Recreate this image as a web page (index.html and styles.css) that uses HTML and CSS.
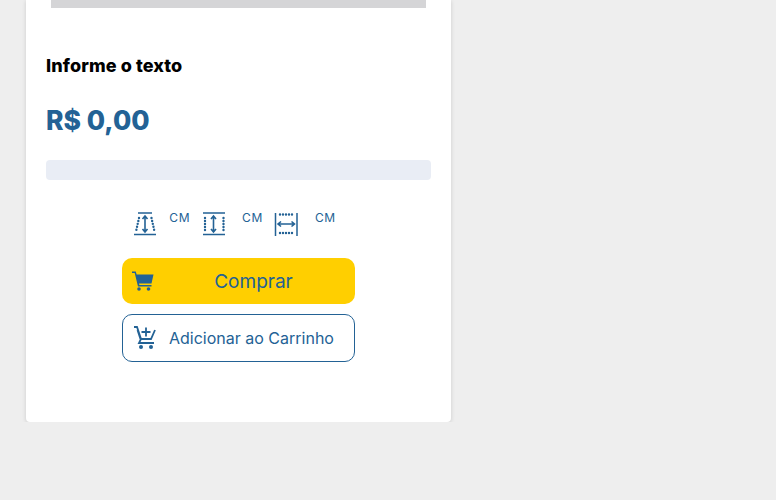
FILE: index.html
```html
<!DOCTYPE html>
<html lang="pt-BR">
<head>
    <meta charset="UTF-8">
    <title>Informe o texto</title>
    <link rel="stylesheet" href="styles.css">
</head>
<body>
<div class="card">
    <div class="preview"></div>
    <div class="content">
        <h2 class="title">Informe o texto</h2>
        <div class="price">R$ 0,00</div>
        <div class="text-input"></div>

        <div class="sizes">
            <div class="size size-1">
                <svg class="size-icon" width="26" height="26" viewBox="0 0 26 26">
                    <path class="line" d="M6 3h14M2 24.500h22"/>
                    <path class="line arrow" d="M13 6v15.500M10.500 9l2.500-3 2.500 3M10.500 19l2.500 3 2.500-3"/>
                    <path class="dots" d="M7 8l-1 4.500-1 4.500-1 4.500M19.500 8l1 4.500 1 4.500 1 4.500"/>
                </svg>
                <span>CM</span>
            </div>
            <div class="size size-2">
                <svg class="size-icon" width="26" height="26" viewBox="0 0 26 26">
                    <path class="line" d="M2 3h22M2 24.500h22"/>
                    <path class="line arrow" d="M12.500 6v15.500M10 9l2.500-3 2.500 3M10 19l2.500 3 2.500-3"/>
                    <path class="dots" d="M4 8v14M22.500 8v14"/>
                </svg>
                <span>CM</span>
            </div>
            <div class="size size-3">
                <svg class="size-icon" width="26" height="26" viewBox="0 0 26 26">
                    <path class="line" d="M2.500 3v23M24 3v23"/>
                    <path class="line arrow" d="M5 14h16.500M8 11.500l-3 2.500 3 2.500M18.500 11.500l3 2.500-3 2.500"/>
                    <path class="dots" d="M7 4.500h13M7 23h13"/>
                </svg>
                <span>CM</span>
            </div>
        </div>

        <button class="btn-buy">
            <svg class="buy-icon" width="22" height="20" viewBox="0 0 22 20">
                <path d="M0 .5h3.800l.8 3h16.900l-2 9H7l.4 1.500h12.100v1.500H6L2.700 2H0z"/>
                <circle cx="7" cy="18" r="1.800"/>
                <circle cx="16.500" cy="18" r="1.800"/>
            </svg>
            <span>Comprar</span>
        </button>
        <button class="btn-cart">
            <svg class="cart-icon" width="24" height="24" viewBox="0 0 24 24">
                <path class="cart-line" d="M0 1h3l4 12-2 4h15M3.500 4l3 9h10.500l4-9"/>
                <path class="cart-line" d="M12 1.500v9M7.500 6h9"/>
                <circle cx="7" cy="21" r="2"/>
                <circle cx="17" cy="21" r="2"/>
            </svg>
            <span>Adicionar ao Carrinho</span>
        </button>
    </div>
</div>
</body>
</html>
```

FILE: styles.css
```css
body {
    font-family: "Inter", "Liberation Sans", sans-serif;
    margin: 0;
    padding: 0;
    background-color: #eeeeee;
    color: #236295;
}
.card {
    width: 425px;
    height: 422px;
    margin-left: 26px;
    background-color: #fff;
    border-radius: 0 0 4px 4px;
    box-shadow: 0 1px 4px rgba(0, 0, 0, 0.15);
}
.preview {
    height: 8px;
    margin: 0 25px;
    background-color: #d5d5d7;
}
.content {
    display: flex;
    flex-direction: column;
    padding: 0 20px;
}
.title {
    margin: 47px 0 0;
    font-size: 18px;
    line-height: 22px;
    font-weight: 800;
    letter-spacing: 0.1px;
    color: #000;
}
.price {
    margin-top: 25px;
    font-size: 26.5px;
    line-height: 36px;
    font-weight: 800;
}
.text-input {
    height: 20px;
    margin-top: 22px;
    background-color: #e9edf5;
    border-radius: 4px;
}
.sizes {
    display: flex;
    justify-content: center;
    height: 26px;
    margin-top: 30px;
}
.size {
    display: flex;
}
.size span {
    font-size: 12px;
    line-height: 16px;
    letter-spacing: 0.6px;
}
.size-1 span {
    margin-left: 11px;
    margin-right: 11px;
}
.size-2 span {
    margin-left: 15px;
    margin-right: 10px;
}
.size-3 span {
    margin-left: 16px;
    margin-right: 9px;
}
.line {
    fill: none;
    stroke: #236295;
    stroke-width: 1.5;
}
.line.arrow {
    stroke-width: 1.6;
}
.dots {
    fill: none;
    stroke: #236295;
    stroke-width: 2.4;
    stroke-linecap: round;
    stroke-dasharray: 0 3;
}
button {
    font-family: inherit;
    color: inherit;
    cursor: pointer;
    display: flex;
    align-items: center;
    width: 233px;
    box-sizing: border-box;
    align-self: center;
}
.btn-buy {
    height: 46px;
    margin-top: 22px;
    padding: 0 0 0 10px;
    background-color: #ffcf00;
    border: none;
    border-radius: 10px;
    font-size: 19px;
}
.btn-buy span {
    flex: 1;
    text-align: center;
    padding-right: 2px;
}
.buy-icon {
    fill: #236295;
}
.btn-cart {
    height: 48px;
    margin-top: 10px;
    padding: 0 0 0 11px;
    background-color: #fff;
    border: 1px solid #236295;
    border-radius: 10px;
    font-size: 16px;
}
.btn-cart span {
    margin-left: 11px;
    white-space: nowrap;
}
.cart-icon {
    fill: #236295;
}
.cart-line {
    fill: none;
    stroke: #236295;
    stroke-width: 1.8;
}
```
